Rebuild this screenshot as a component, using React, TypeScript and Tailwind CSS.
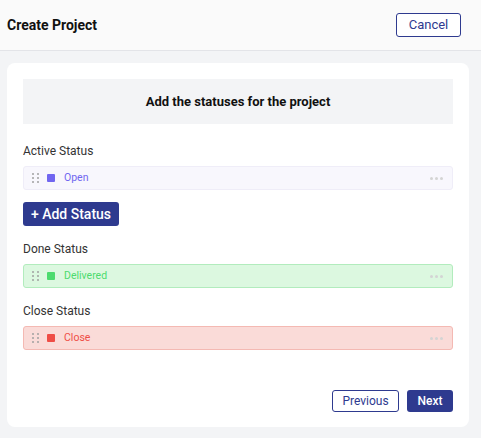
const statusGroups = [
  {
    label: "Active Status",
    name: "Open",
    row: "bg-[#f8f7fd] border-[#efedf8]",
    swatch: "bg-[#7166f0]",
    text: "text-[#7166f0]",
    addButton: true,
  },
  {
    label: "Done Status",
    name: "Delivered",
    row: "bg-[#dcf8e0] border-[#b2ecbd]",
    swatch: "bg-[#4cdb6e]",
    text: "text-[#4cdb6e]",
    addButton: false,
  },
  {
    label: "Close Status",
    name: "Close",
    row: "bg-[#fadbd8] border-[#f4b9b3]",
    swatch: "bg-[#ef4d46]",
    text: "text-[#ef4d46]",
    addButton: false,
  },
];

function DragHandle() {
  return (
    <div className="grid grid-cols-2 gap-x-[3px] gap-y-[2px]">
      {[0, 1, 2, 3, 4, 5].map((i) => (
        <span key={i} className="w-[2px] h-[2px] rounded-full bg-[#a0a0a0]" />
      ))}
    </div>
  );
}

function StatusRow({ group }: { group: (typeof statusGroups)[number] }) {
  return (
    <div
      className={`h-[24px] flex items-center border rounded-[3px] pl-[8px] pr-[9px] ${group.row}`}
    >
      <DragHandle />
      <span className={`w-[8px] h-[8px] rounded-[1px] ml-[8px] ${group.swatch}`} />
      <span className={`ml-[9px] text-[10.5px] ${group.text}`}>{group.name}</span>
      <span className="ml-auto flex gap-[2px]">
        <span className="w-[3px] h-[3px] rounded-full bg-[#d4d4d4]" />
        <span className="w-[3px] h-[3px] rounded-full bg-[#d4d4d4]" />
        <span className="w-[3px] h-[3px] rounded-full bg-[#d4d4d4]" />
      </span>
    </div>
  );
}

export default function App() {
  return (
    <div
      className="w-[481px] h-[438px] bg-[#f3f4f6] overflow-hidden"
      style={{ fontFamily: "Roboto, 'Liberation Sans', sans-serif" }}
    >
      {/* Header */}
      <div className="h-[51px] bg-[#fafafa] border-b border-[#e3e4e8] flex items-center justify-between pl-[7px] pr-[20px]">
        <h1 className="text-[14px] font-bold text-[#111]">Create Project</h1>
        <button className="w-[65px] h-[24px] border border-[#2e3a8f] rounded-[3px] bg-white text-[13px] text-[#2e3a8f]">
          Cancel
        </button>
      </div>

      {/* Card */}
      <div className="ml-[7px] mt-[12px] w-[462px] h-[364px] bg-white rounded-[8px] px-[16px] pt-[16px] pb-[15px] flex flex-col">
        <div className="h-[45px] bg-[#f3f4f6] flex items-center justify-center">
          <h2 className="text-[13px] font-bold text-[#111]">Add the statuses for the project</h2>
        </div>

        {statusGroups.map((group, i) => (
          <div key={group.label} className={i === 0 ? "mt-[19px]" : "mt-[15px]"}>
            <div className="h-[16px] leading-[16px] text-[12px] text-[#333]">{group.label}</div>
            <div className="mt-[7px]">
              <StatusRow group={group} />
            </div>
            {group.addButton && (
              <button className="mt-[12px] h-[24px] w-[96px] rounded-[3px] bg-[#2e3a8f] text-white text-[14px] font-medium">
                + Add Status
              </button>
            )}
          </div>
        ))}

        <div className="mt-auto flex justify-end gap-[8px]">
          <button className="w-[67px] h-[22px] border border-[#2e3a8f] rounded-[3px] bg-white text-[12px] text-[#2e3a8f]">
            Previous
          </button>
          <button className="w-[46px] h-[22px] rounded-[3px] bg-[#2e3a8f] text-[12px] font-medium text-white">
            Next
          </button>
        </div>
      </div>
    </div>
  );
}
